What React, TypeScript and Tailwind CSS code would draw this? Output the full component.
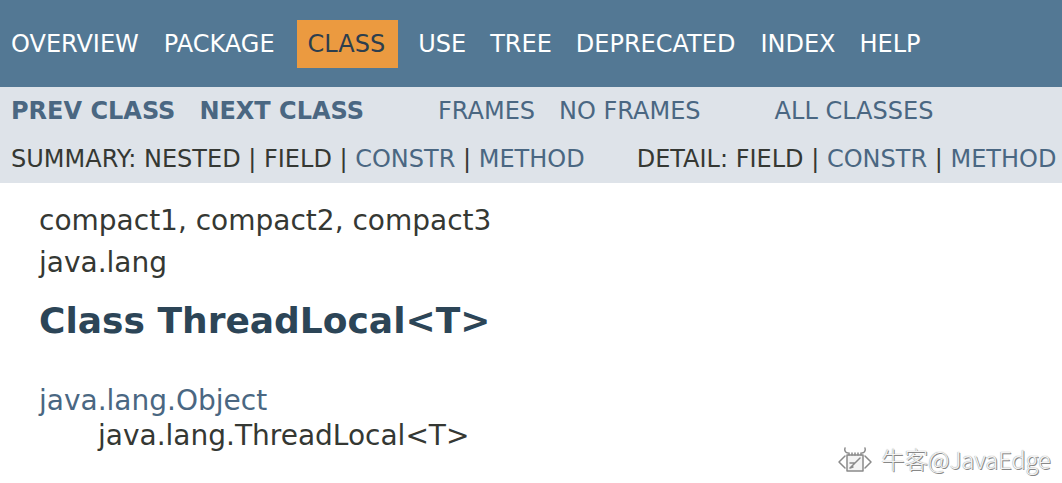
import React from "react";

const font = { fontFamily: '"DejaVu Sans", Verdana, sans-serif' };

export default function App() {
  return (
    <div className="relative w-[1062px] h-[483px] bg-white overflow-hidden text-[#353833]" style={font}>
      {/* top nav */}
      <div className="h-[87px] bg-[#537894] flex items-start pt-[20px] pl-[11px] text-[24px] text-white whitespace-nowrap">
        <div className="h-[48px] flex items-center mr-[25px]">OVERVIEW</div>
        <div className="h-[48px] flex items-center mr-[22px]">PACKAGE</div>
        <div className="h-[48px] flex items-center bg-[#EB9A40] text-[#2c3e4e] pl-[11px] pr-[13px] mr-[20px]">CLASS</div>
        <div className="h-[48px] flex items-center mr-[24px]">USE</div>
        <div className="h-[48px] flex items-center mr-[24px]">TREE</div>
        <div className="h-[48px] flex items-center mr-[25px]">DEPRECATED</div>
        <div className="h-[48px] flex items-center mr-[24px]">INDEX</div>
        <div className="h-[48px] flex items-center">HELP</div>
      </div>
      {/* sub nav */}
      <div className="h-[96px] bg-[#dee3e9] pl-[11px] text-[24px] whitespace-nowrap">
        <div className="h-[47px] pt-[1px] flex items-center text-[#4A6782]">
          <span className="font-bold mr-[24px]">PREV CLASS</span>
          <span className="font-bold mr-[74px]">NEXT CLASS</span>
          <span className="mr-[24px]">FRAMES</span>
          <span className="mr-[74px]">NO FRAMES</span>
          <span>ALL CLASSES</span>
        </div>
        <div className="h-[49px] flex items-center whitespace-pre">
          <span>SUMMARY: NESTED | FIELD | </span>
          <span className="text-[#4A6782]">CONSTR</span>
          <span> | </span>
          <span className="text-[#4A6782]">METHOD</span>
          <span className="ml-[52px]">DETAIL: FIELD | </span>
          <span className="text-[#4A6782]">CONSTR</span>
          <span> | </span>
          <span className="text-[#4A6782]">METHOD</span>
        </div>
      </div>
      {/* body */}
      <div className="pl-[39px] pt-[18px] text-[28px] whitespace-nowrap">
        <div className="h-[40px] flex items-center">compact1, compact2, compact3</div>
        <div className="h-[43px] flex items-center">java.lang</div>
        <div className="h-[74px] flex items-center text-[36px] font-bold text-[#2c4557]">Class ThreadLocal&lt;T&gt;</div>
        <div className="h-[40px] mt-[23px] flex items-center text-[#4A6782]">java.lang.Object</div>
        <div className="h-[30px] flex items-center pl-[59px]">java.lang.ThreadLocal&lt;T&gt;</div>
      </div>
      {/* watermark */}
      <div
        className="absolute left-[836px] top-[442px] flex items-center gap-[7px] text-[23.5px] font-light text-[#f4f4f4]"
        style={{
          fontFamily: '"Noto Sans CJK SC", "Noto Sans", sans-serif',
          textShadow: "0 0 1px #7a7a7a, 1px 1px 0 #8a8a8a",
        }}
      >
        <svg width="38" height="28" viewBox="0 0 38 28" fill="none" stroke="#8a8a8a" strokeWidth="1.5" strokeLinejoin="round" strokeLinecap="round">
          <path d="M9 10 L3 16 L9 22" />
          <path d="M29 10 L35 16 L29 22" />
          <path d="M11 9 H27 V25 H11 Z" fill="#f4f4f4" />
          <path d="M13 9 V7 M16 9 V7 M19 9 V7 M22 9 V7 M25 9 V7" />
          <path d="M14 22 L24 12 M14 22 L17 21 M14 17 H19" />
          <path d="M9 2 C8 5 10 7 12 7 M29 2 C30 5 28 7 26 7" />
        </svg>
        <span>牛客@JavaEdge</span>
      </div>
    </div>
  );
}
